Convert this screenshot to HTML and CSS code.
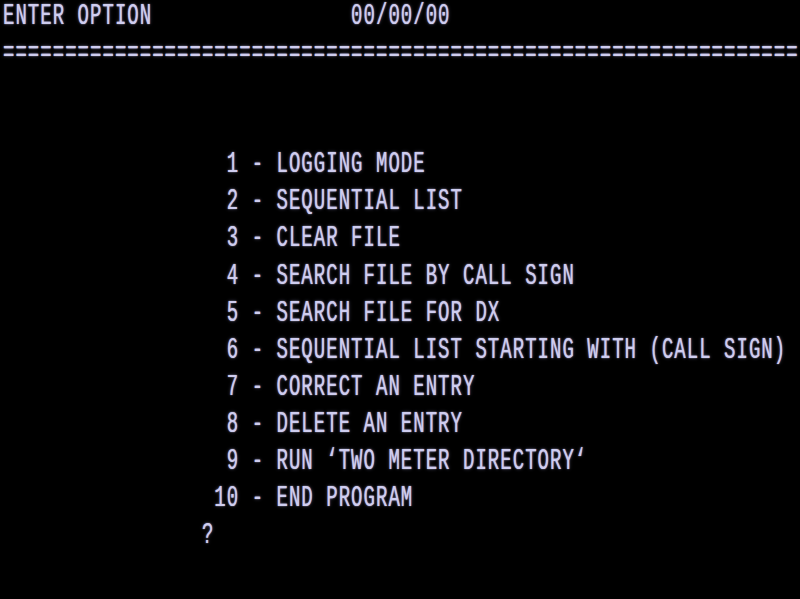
FILE: index.html
```html
<!DOCTYPE html>
<html>
<head>
<meta charset="utf-8">
<link rel="stylesheet" href="styles.css">
</head>
<body>
<div class="screen">
<div class="row">ENTER OPTION                00/00/00</div>
<div class="row">================================================================</div>
<div class="row"> </div>
<div class="row"> </div>
<div class="row">                  1 - LOGGING MODE</div>
<div class="row">                  2 - SEQUENTIAL LIST</div>
<div class="row">                  3 - CLEAR FILE</div>
<div class="row">                  4 - SEARCH FILE BY CALL SIGN</div>
<div class="row">                  5 - SEARCH FILE FOR DX</div>
<div class="row">                  6 - SEQUENTIAL LIST STARTING WITH (CALL SIGN)</div>
<div class="row">                  7 - CORRECT AN ENTRY</div>
<div class="row">                  8 - DELETE AN ENTRY</div>
<div class="row">                  9 - RUN ‘TWO METER DIRECTORY‘</div>
<div class="row">                 10 - END PROGRAM</div>
<div class="row">                ?</div>
<div class="row"> </div>
</div>
</body>
</html>
```
FILE: styles.css
```css
html, body {
  margin: 0;
  padding: 0;
  background: #000;
  width: 800px;
  height: 599px;
  overflow: hidden;
}
.screen {
  display: flex;
  flex-direction: column;
  width: 800px;
  height: 599px;
}
.row {
  height: 37.08px;
  flex: none;
  white-space: pre;
  padding-left: 3px;
  font-family: "Liberation Mono", monospace;
  font-size: 19px;
  line-height: 20px;
  letter-spacing: 1.03px;
  color: #cfcdef;
  text-shadow: 0 0 1px #bdbbe0, 0 0 3px rgba(180,178,230,0.35);
  transform: scaleY(1.57);
  transform-origin: 0 0;
}
```
